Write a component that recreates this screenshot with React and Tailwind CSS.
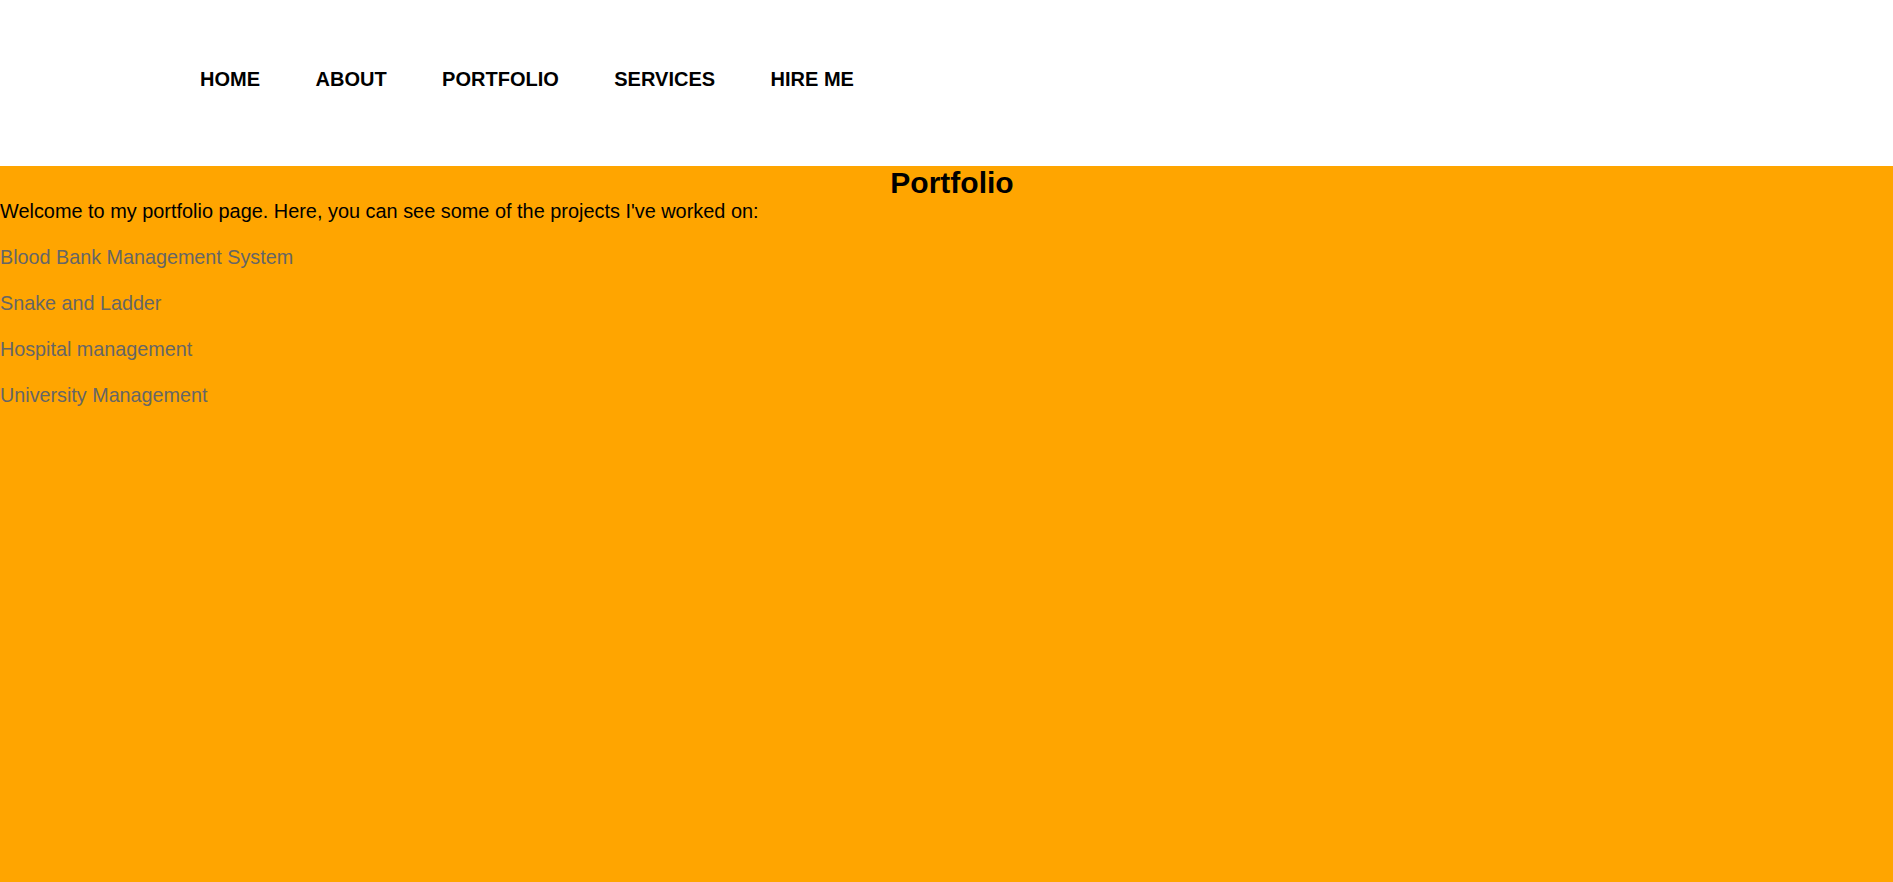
const NAV = ['HOME', 'ABOUT', 'PORTFOLIO', 'SERVICES', 'HIRE ME'];

const PROJECTS = [
    'Blood Bank Management System',
    'Snake and Ladder',
    'Hospital management',
    'University Management',
];

export default function App() {
    return (
        <div className="min-h-screen flex flex-col bg-white text-black font-['Liberation_Sans',Arial,sans-serif]">
            {/* Header / nav */}
            <header className="h-[166px] shrink-0 bg-white pt-[68px] pl-[200px]">
                <nav className="flex gap-[55.5px]">
                    {NAV.map(item => (
                        <a key={item} href="#" className="text-[20px] leading-[23px] font-bold text-black">
                            {item}
                        </a>
                    ))}
                </nav>
            </header>

            {/* Portfolio section */}
            <main className="flex-1 bg-[#ffa500]">
                <h1 className="text-[30px] leading-[33px] font-bold text-center pl-[11px]">Portfolio</h1>
                <p className="text-[19.9px] leading-[23px] mt-[1px] mb-[23px]">
                    Welcome to my portfolio page. Here, you can see some of the projects I've worked on:
                </p>
                <div className="flex flex-col items-start gap-[23px]">
                    {PROJECTS.map(p => (
                        <a key={p} href="#" className="text-[19.75px] leading-[23px] text-[#666666]">
                            {p}
                        </a>
                    ))}
                </div>
            </main>
        </div>
    );
}
